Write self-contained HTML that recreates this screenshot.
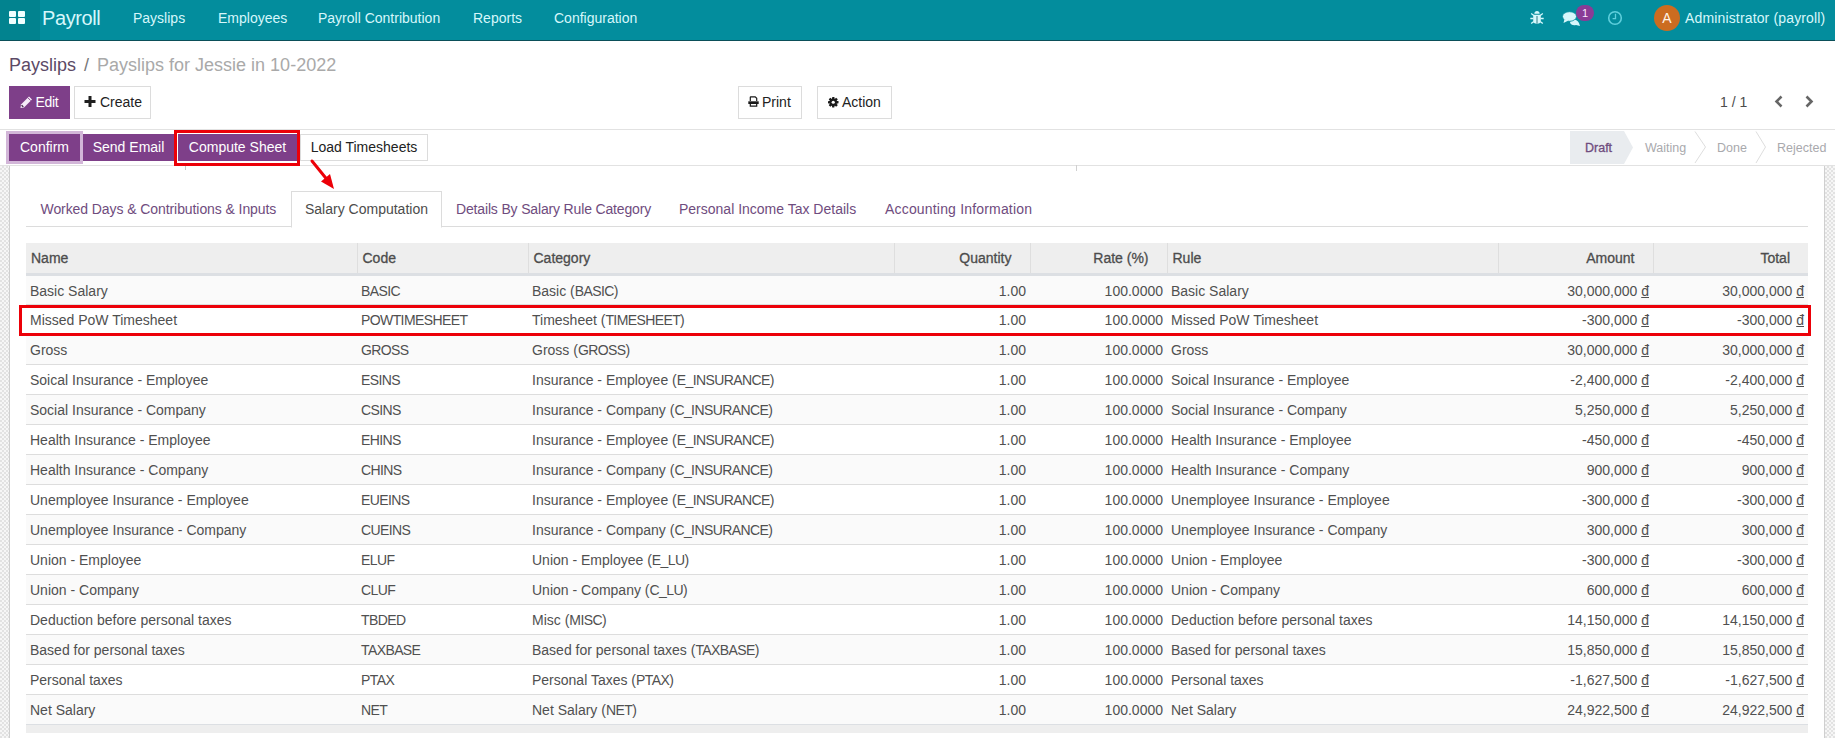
<!DOCTYPE html>
<html><head><meta charset="utf-8">
<style>
*{box-sizing:border-box;margin:0;padding:0}
html,body{width:1835px;height:738px;overflow:hidden;background:#fff;font-family:"Liberation Sans",sans-serif;font-size:14px;color:#4c4c4c}
.uc{letter-spacing:-0.6px}
td{color:#505050}
.abs{position:absolute}
.nav{position:absolute;left:0;top:0;width:1835px;height:41px;background:#038d9d;border-bottom:1px solid #0b4f59}
.apps{position:absolute;left:0;top:0;width:40px;height:40px;background:#02838f}
.apps i{position:absolute;width:7px;height:6px;background:#f2ffff;border-radius:1px}
.navt{position:absolute;top:0;height:36px;line-height:36px;color:#d6f7fb;white-space:nowrap}
.cp{position:absolute;left:0;top:41px;width:1835px;height:89px;border-bottom:1px solid #e2e2e2;background:#fff}
.bc{position:absolute;top:13px;left:9px;font-size:18px;line-height:22px;white-space:nowrap}
.btn{position:absolute;height:33px;line-height:31px;text-align:center;border:1px solid #dcdcdc;background:#fff;color:#222;white-space:nowrap}
.btnp{background:#7e3f89;border-color:#7e3f89;color:#fff}
.sb{position:absolute;left:0;top:130px;width:1835px;height:36px;border-bottom:1px solid #e2e2e2;background:#fff}
.sbtn{position:absolute;top:134px;height:27px;line-height:27px;text-align:center;white-space:nowrap;color:#fff;background:#7e3f89}
.checker{position:absolute;top:166px;height:572px;background-color:#f6f6f6;background-image:linear-gradient(45deg,#e2e2e2 25%,transparent 25%,transparent 75%,#e2e2e2 75%),linear-gradient(45deg,#e2e2e2 25%,transparent 25%,transparent 75%,#e2e2e2 75%);background-size:4px 4px;background-position:0 0,2px 2px}
.tabs{position:absolute;left:26px;top:191px;width:1782px;height:36px;border-bottom:1px solid #dcdcdc}
.tab{position:absolute;top:0;height:36px;line-height:36px;color:#6f4c7e;white-space:nowrap}
table{position:absolute;left:26px;top:243px;width:1782px;border-collapse:collapse;table-layout:fixed}
th{height:31px;background:#eeeeee;font-weight:normal;-webkit-text-stroke:0.3px #4c4c4c;text-align:left;padding:0 5px;border-bottom:3px solid #dcdfe3;border-left:1px solid #dedede;white-space:nowrap;color:#4c4c4c}
th:first-child{border-left:none}
td{height:30px;padding:2px 4px 0;border-top:1px solid #dddddd;white-space:nowrap}
tbody tr:nth-child(odd) td{background:#fafafa}
.r{text-align:right}
th.r{padding-right:18px}
.u{text-decoration:underline}
</style></head><body>
<div class="nav">
  <div class="apps"><i style="left:9px;top:11px"></i><i style="left:18px;top:11px"></i><i style="left:9px;top:18px"></i><i style="left:18px;top:18px"></i></div>
  <div class="navt" style="left:42px;font-size:20px;top:-0.5px;letter-spacing:-0.4px">Payroll</div>
  <div class="navt" style="left:133px">Payslips</div>
  <div class="navt" style="left:218px">Employees</div>
  <div class="navt" style="left:318px">Payroll Contribution</div>
  <div class="navt" style="left:473px">Reports</div>
  <div class="navt" style="left:554px">Configuration</div>
  
  <svg class="abs" style="left:1528px;top:9px" width="18" height="17" viewBox="0 0 18 17">
    <path d="M6.3 4.8 Q6.6 2 9 2 Q11.4 2 11.7 4.8 Z" fill="#d6f7fb"/>
    <path d="M5.2 5.8 H12.8 V12 Q12.8 14.8 9 14.8 Q5.2 14.8 5.2 12 Z" fill="#d6f7fb"/>
    <line x1="9" y1="7" x2="9" y2="14.6" stroke="#1d6a74" stroke-width="0.9"/>
    <path d="M2.3 9.5 H5.5 M12.5 9.5 H15.7 M3.2 4.6 L5.8 6.5 M14.8 4.6 L12.2 6.5 M3.2 14.6 L5.8 12.5 M14.8 14.6 L12.2 12.5" stroke="#d6f7fb" stroke-width="1.3" fill="none"/>
  </svg>
  <svg class="abs" style="left:1561px;top:9px" width="22" height="18" viewBox="0 0 22 18">
    <path d="M10 10 Q16 10 18 14 L19 17 L15 16 Q11 17 9 14 Z" fill="#d6f7fb"/>
    <ellipse cx="8.5" cy="7.5" rx="7" ry="4.8" fill="#d6f7fb" stroke="#038d9d" stroke-width="0.8"/>
    <path d="M3.5 10 L2.5 14 L7.5 11.5 Z" fill="#d6f7fb"/>
  </svg>
  <div class="abs" style="left:1576px;top:5px;width:18px;height:16px;border-radius:8px;background:#8a3b96;color:#fbe9ff;font-size:11px;line-height:16px;text-align:center">1</div>
  <svg class="abs" style="left:1606px;top:9px" width="18" height="18" viewBox="0 0 18 18">
    <circle cx="9" cy="9" r="6.3" fill="none" stroke="#5fcfdc" stroke-width="1.6"/>
    <path d="M9.5 4.8 V9.6 H6.6" fill="none" stroke="#5fcfdc" stroke-width="1.3"/>
  </svg>
<div class="navt" style="left:1685px;letter-spacing:0.15px">Administrator (payroll)</div>
  <div class="abs" style="left:1654px;top:5px;width:26px;height:26px;border-radius:13px;background:#cc6c20;color:#fff4e8;font-size:14px;line-height:26px;text-align:center">A</div>
</div>
<div class="cp">
  <div class="bc"><span style="color:#5c4a66">Payslips</span><span style="color:#777;padding:0 8px">/</span><span style="color:#a9a9a9">Payslips for Jessie in 10-2022</span></div>
</div>
<div class="btn btnp" style="left:9px;top:86px;width:61px"></div><svg class="abs" style="left:18px;top:94px" width="16" height="16" viewBox="0 0 16 16"><path d="M2.5 14 L3 10.5 L11 2.5 L14 5.5 L6 13.5 Z" fill="#f6ecf8"/><path d="M9.8 3.7 L12.8 6.7" stroke="#7e3f89" stroke-width="0.9"/><path d="M3.6 11.3 L5.3 12.9" stroke="#3a2040" stroke-width="1.3"/></svg><div class="abs" style="left:35.5px;top:86px;line-height:33px;color:#fff;letter-spacing:-0.3px">Edit</div>
<div class="btn" style="left:74px;top:86px;width:77px"></div><svg class="abs" style="left:84px;top:96px" width="12" height="11" viewBox="0 0 12 11"><path d="M4.5 0 H7.5 V4 H11.5 V7 H7.5 V11 H4.5 V7 H0.5 V4 H4.5 Z" fill="#1f1f1f"/></svg><div class="abs" style="left:100px;top:86px;line-height:33px;color:#222">Create</div>
<div class="btn" style="left:738px;top:86px;width:64px"></div><svg class="abs" style="left:748px;top:96px" width="11" height="11" viewBox="0 0 11 11"><path d="M2.3 5 V1.3 Q2.3 0.8 2.8 0.8 H7.2 L8.7 2.3 V5" fill="none" stroke="#1a1a1a" stroke-width="1.2"/><path d="M0.3 5.3 H10.7 V8 H0.3 Z" fill="#1a1a1a"/><path d="M2.3 7.5 V10.2 H8.7 V7.5" fill="none" stroke="#1a1a1a" stroke-width="1.2"/></svg><div class="abs" style="left:762px;top:86px;line-height:33px;color:#222">Print</div>
<div class="btn" style="left:817px;top:86px;width:75px"></div><svg class="abs" style="left:828px;top:97px" width="10.5" height="10.5" viewBox="0 0 10.5 10.5"><rect x="4.05" y="0" width="2.4" height="3.2" rx="0.4" transform="rotate(0 5.25 5.25)" fill="#1a1a1a"/><rect x="4.05" y="0" width="2.4" height="3.2" rx="0.4" transform="rotate(45 5.25 5.25)" fill="#1a1a1a"/><rect x="4.05" y="0" width="2.4" height="3.2" rx="0.4" transform="rotate(90 5.25 5.25)" fill="#1a1a1a"/><rect x="4.05" y="0" width="2.4" height="3.2" rx="0.4" transform="rotate(135 5.25 5.25)" fill="#1a1a1a"/><rect x="4.05" y="0" width="2.4" height="3.2" rx="0.4" transform="rotate(180 5.25 5.25)" fill="#1a1a1a"/><rect x="4.05" y="0" width="2.4" height="3.2" rx="0.4" transform="rotate(225 5.25 5.25)" fill="#1a1a1a"/><rect x="4.05" y="0" width="2.4" height="3.2" rx="0.4" transform="rotate(270 5.25 5.25)" fill="#1a1a1a"/><rect x="4.05" y="0" width="2.4" height="3.2" rx="0.4" transform="rotate(315 5.25 5.25)" fill="#1a1a1a"/><circle cx="5.25" cy="5.25" r="3.7" fill="#1a1a1a"/><circle cx="5.25" cy="5.25" r="1.6" fill="#fff"/></svg><div class="abs" style="left:842px;top:86px;line-height:33px;color:#222">Action</div>
<div class="abs" style="left:1720px;top:94px;line-height:16px;color:#4c4c4c">1 / 1</div><svg class="abs" style="left:1772px;top:93px" width="45" height="17"><path d="M9.5 3.5 L4.5 8.5 L9.5 13.5" fill="none" stroke="#666" stroke-width="2.6"/><path d="M34.5 3.5 L39.5 8.5 L34.5 13.5" fill="none" stroke="#666" stroke-width="2.6"/></svg>
<div class="sb"></div>
<div class="abs" style="left:6px;top:131px;width:77px;height:33px;background:#d2b6d8"></div>
<div class="sbtn" style="left:9px;width:71px">Confirm</div>
<div class="sbtn" style="left:83px;width:91px">Send Email</div>
<div class="sbtn" style="left:178px;width:119px">Compute Sheet</div>
<div class="abs" style="left:174px;top:130px;width:126px;height:36px;border:3px solid #ec0008"></div>
<div class="btn" style="left:300px;top:134px;width:128px;height:27px;line-height:25px">Load Timesheets</div>
<svg class="abs" style="left:1568px;top:130px" width="267" height="35">
<path d="M2 1 H56 L65 17.5 L56 34 H2 Z" fill="#e9ecef"/>
<path d="M127 1.5 L137.5 17 L127 33 M188 1.5 L197.5 17 L188 33" fill="none" stroke="#dedede" stroke-width="1"/>
</svg>
<div class="abs" style="left:1585px;top:139.5px;font-size:12.5px;line-height:16px;color:#6f4c7e;-webkit-text-stroke:0.3px #6f4c7e">Draft</div>
<div class="abs" style="left:1645px;top:139.5px;font-size:12.5px;line-height:16px;color:#a9a9ad">Waiting</div>
<div class="abs" style="left:1717px;top:139.5px;font-size:12.5px;line-height:16px;color:#a9a9ad">Done</div>
<div class="abs" style="left:1777px;top:139.5px;font-size:12.5px;line-height:16px;color:#a9a9ad">Rejected</div>
<div class="checker" style="left:0;width:9px"></div>
<div class="abs" style="left:9px;top:166px;width:1px;height:572px;background:#cfcfcf"></div>
<div class="checker" style="left:1825px;width:10px"></div>
<div class="abs" style="left:1824px;top:166px;width:1px;height:572px;background:#cfcfcf"></div>
<div class="tabs">
  <div class="tab" style="left:14.5px;letter-spacing:-0.08px">Worked Days &amp; Contributions &amp; Inputs</div>
  <div class="abs" style="left:265px;top:0;width:151px;height:37px;border:1px solid #dcdcdc;border-bottom-color:#fff;background:#fff"></div>
  <div class="tab" style="left:279px;color:#4c4c4c">Salary Computation</div>
  <div class="tab" style="left:430px;letter-spacing:-0.16px">Details By Salary Rule Category</div>
  <div class="tab" style="left:653px">Personal Income Tax Details</div>
  <div class="tab" style="left:859px;letter-spacing:0.18px">Accounting Information</div>
</div>
<table>
<colgroup><col style="width:331px"><col style="width:171px"><col style="width:366px"><col style="width:136px"><col style="width:137px"><col style="width:331px"><col style="width:155px"><col style="width:155px"></colgroup>
<thead><tr><th>Name</th><th>Code</th><th>Category</th><th class="r">Quantity</th><th class="r">Rate (%)</th><th>Rule</th><th class="r">Amount</th><th class="r">Total</th></tr></thead>
<tbody>
<tr><td>Basic Salary</td><td><span class="uc">BASIC</span></td><td>Basic (<span class="uc">BASIC</span>)</td><td class="r">1.00</td><td class="r">100.0000</td><td>Basic Salary</td><td class="r">30,000,000 <span class="u">&#273;</span></td><td class="r">30,000,000 <span class="u">&#273;</span></td></tr>
<tr><td>Missed PoW Timesheet</td><td><span class="uc">POWTIMESHEET</span></td><td>Timesheet (<span class="uc">TIMESHEET</span>)</td><td class="r">1.00</td><td class="r">100.0000</td><td>Missed PoW Timesheet</td><td class="r">-300,000 <span class="u">&#273;</span></td><td class="r">-300,000 <span class="u">&#273;</span></td></tr>
<tr><td>Gross</td><td><span class="uc">GROSS</span></td><td>Gross (<span class="uc">GROSS</span>)</td><td class="r">1.00</td><td class="r">100.0000</td><td>Gross</td><td class="r">30,000,000 <span class="u">&#273;</span></td><td class="r">30,000,000 <span class="u">&#273;</span></td></tr>
<tr><td>Soical Insurance - Employee</td><td><span class="uc">ESINS</span></td><td>Insurance - Employee (<span class="uc">E_INSURANCE</span>)</td><td class="r">1.00</td><td class="r">100.0000</td><td>Soical Insurance - Employee</td><td class="r">-2,400,000 <span class="u">&#273;</span></td><td class="r">-2,400,000 <span class="u">&#273;</span></td></tr>
<tr><td>Social Insurance - Company</td><td><span class="uc">CSINS</span></td><td>Insurance - Company (<span class="uc">C_INSURANCE</span>)</td><td class="r">1.00</td><td class="r">100.0000</td><td>Social Insurance - Company</td><td class="r">5,250,000 <span class="u">&#273;</span></td><td class="r">5,250,000 <span class="u">&#273;</span></td></tr>
<tr><td>Health Insurance - Employee</td><td><span class="uc">EHINS</span></td><td>Insurance - Employee (<span class="uc">E_INSURANCE</span>)</td><td class="r">1.00</td><td class="r">100.0000</td><td>Health Insurance - Employee</td><td class="r">-450,000 <span class="u">&#273;</span></td><td class="r">-450,000 <span class="u">&#273;</span></td></tr>
<tr><td>Health Insurance - Company</td><td><span class="uc">CHINS</span></td><td>Insurance - Company (<span class="uc">C_INSURANCE</span>)</td><td class="r">1.00</td><td class="r">100.0000</td><td>Health Insurance - Company</td><td class="r">900,000 <span class="u">&#273;</span></td><td class="r">900,000 <span class="u">&#273;</span></td></tr>
<tr><td>Unemployee Insurance - Employee</td><td><span class="uc">EUEINS</span></td><td>Insurance - Employee (<span class="uc">E_INSURANCE</span>)</td><td class="r">1.00</td><td class="r">100.0000</td><td>Unemployee Insurance - Employee</td><td class="r">-300,000 <span class="u">&#273;</span></td><td class="r">-300,000 <span class="u">&#273;</span></td></tr>
<tr><td>Unemployee Insurance - Company</td><td><span class="uc">CUEINS</span></td><td>Insurance - Company (<span class="uc">C_INSURANCE</span>)</td><td class="r">1.00</td><td class="r">100.0000</td><td>Unemployee Insurance - Company</td><td class="r">300,000 <span class="u">&#273;</span></td><td class="r">300,000 <span class="u">&#273;</span></td></tr>
<tr><td>Union - Employee</td><td><span class="uc">ELUF</span></td><td>Union - Employee (<span class="uc">E_LU</span>)</td><td class="r">1.00</td><td class="r">100.0000</td><td>Union - Employee</td><td class="r">-300,000 <span class="u">&#273;</span></td><td class="r">-300,000 <span class="u">&#273;</span></td></tr>
<tr><td>Union - Company</td><td><span class="uc">CLUF</span></td><td>Union - Company (<span class="uc">C_LU</span>)</td><td class="r">1.00</td><td class="r">100.0000</td><td>Union - Company</td><td class="r">600,000 <span class="u">&#273;</span></td><td class="r">600,000 <span class="u">&#273;</span></td></tr>
<tr><td>Deduction before personal taxes</td><td><span class="uc">TBDED</span></td><td>Misc (<span class="uc">MISC</span>)</td><td class="r">1.00</td><td class="r">100.0000</td><td>Deduction before personal taxes</td><td class="r">14,150,000 <span class="u">&#273;</span></td><td class="r">14,150,000 <span class="u">&#273;</span></td></tr>
<tr><td>Based for personal taxes</td><td><span class="uc">TAXBASE</span></td><td>Based for personal taxes (<span class="uc">TAXBASE</span>)</td><td class="r">1.00</td><td class="r">100.0000</td><td>Based for personal taxes</td><td class="r">15,850,000 <span class="u">&#273;</span></td><td class="r">15,850,000 <span class="u">&#273;</span></td></tr>
<tr><td>Personal taxes</td><td><span class="uc">PTAX</span></td><td>Personal Taxes (<span class="uc">PTAX</span>)</td><td class="r">1.00</td><td class="r">100.0000</td><td>Personal taxes</td><td class="r">-1,627,500 <span class="u">&#273;</span></td><td class="r">-1,627,500 <span class="u">&#273;</span></td></tr>
<tr><td>Net Salary</td><td><span class="uc">NET</span></td><td>Net Salary (<span class="uc">NET</span>)</td><td class="r">1.00</td><td class="r">100.0000</td><td>Net Salary</td><td class="r">24,922,500 <span class="u">&#273;</span></td><td class="r">24,922,500 <span class="u">&#273;</span></td></tr>
</tbody></table>
<div class="abs" style="left:26px;top:724px;width:1782px;height:9px;background:#eeeeee;border-top:1px solid #dcdfe3"></div>
<div class="abs" style="left:19px;top:305px;width:1792px;height:31px;border:3px solid #ec0008"></div>
<svg class="abs" style="left:0;top:0" width="1835" height="738"><line x1="312" y1="161" x2="329" y2="182" stroke="#ec0008" stroke-width="3" stroke-linecap="round"/><polygon points="334,189 321,181.5 330,174" fill="#ec0008"/></svg>
<div class="abs" style="left:185px;top:166px;width:1px;height:4px;background:#c8c8c8"></div><div class="abs" style="left:1076px;top:165px;width:1px;height:6px;background:#d0d0d0"></div>
</body></html>
